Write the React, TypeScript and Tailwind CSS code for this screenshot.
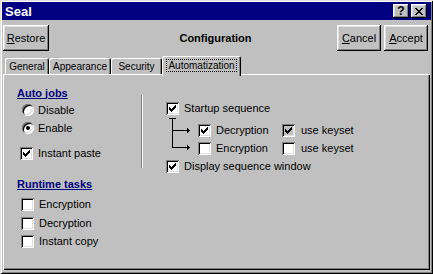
import React from "react";

const font = { fontFamily: '"Liberation Sans", Arial, sans-serif' };

const raised =
  "shadow-[inset_-1px_-1px_0_#000,inset_1px_1px_0_#fff,inset_-2px_-2px_0_#808080,inset_2px_2px_0_#dfdfdf]";
const sunken =
  "shadow-[inset_1px_1px_0_#808080,inset_-1px_-1px_0_#fff,inset_2px_2px_0_#000,inset_-2px_-2px_0_#dfdfdf]";

function Check({ checked = false, disabled = false }: { checked?: boolean; disabled?: boolean }) {
  return (
    <span
      className={`relative block w-[13px] h-[13px] shrink-0 ${sunken} ${disabled ? "bg-[#c0c0c0]" : "bg-white"}`}
    >
      {checked && (
        <svg width="13" height="13" viewBox="0 0 13 13" className="absolute left-0 top-0" shapeRendering="crispEdges">
          <path
            fill="#000"
            d="M9 3h1v1h-1z M8 4h2v1h-2z M3 5h1v1h-1z M7 5h3v1h-3z M3 6h2v1h-2z M6 6h3v1h-3z M3 7h5v1h-5z M4 8h3v1h-3z M5 9h1v1h-1z"
          />
        </svg>
      )}
    </span>
  );
}

function Radio({ checked = false }: { checked?: boolean }) {
  return (
    <span className={`flex items-center justify-center w-[12px] h-[12px] rounded-full bg-white shrink-0 ${sunken}`}>
      {checked && <span className="block w-[4px] h-[4px] rounded-full bg-black" />}
    </span>
  );
}

function CheckRow({
  label,
  checked,
  disabled,
  className = "",
}: {
  label: string;
  checked?: boolean;
  disabled?: boolean;
  className?: string;
}) {
  return (
    <div className={`flex items-center h-[14px] gap-[5px] ${className}`}>
      <Check checked={checked} disabled={disabled} />
      <span>{label}</span>
    </div>
  );
}

function Heading({ children, className = "" }: { children: React.ReactNode; className?: string }) {
  return (
    <div className={`h-[14px] flex items-center font-bold underline text-[#000080] ${className}`}>{children}</div>
  );
}

function Button({ children, className = "" }: { children: React.ReactNode; className?: string }) {
  return (
    <div className={`flex items-center justify-center h-[26px] bg-[#c0c0c0] ${raised} ${className}`}>{children}</div>
  );
}

function Tab({ label, active = false, className = "" }: { label: string; active?: boolean; className?: string }) {
  if (active) {
    return (
      <div
        className={`relative z-10 h-[20px] -mb-[2px] flex justify-center pt-[3px] bg-[#c0c0c0] text-[10px] rounded-tl-[2px] rounded-tr-[2px] shadow-[inset_1px_1px_0_#fff,inset_-1px_0_0_#000,inset_-2px_0_0_#808080] ${className}`}
      >
        <span className="h-[13px] px-[1px] leading-[11px] border border-dotted border-black">{label}</span>
      </div>
    );
  }
  return (
    <div
      className={`h-[16px] flex justify-center pt-[3px] text-[10px] leading-[11px] rounded-tl-[2px] rounded-tr-[2px] shadow-[inset_1px_1px_0_#fff,inset_-1px_0_0_#000,inset_-2px_0_0_#808080] ${className}`}
    >
      {label}
    </div>
  );
}

export default function App() {
  return (
    <div
      style={font}
      className="w-[433px] h-[274px] flex flex-col px-[2px] pt-[2px] pb-[4px] bg-[#c0c0c0] text-[11px] leading-[13px] text-black shadow-[inset_1px_1px_0_#dfdfdf,inset_-1px_-1px_0_#000,inset_2px_2px_0_#fff,inset_-2px_-2px_0_#808080] overflow-hidden"
    >
      {/* title bar */}
      <div className="h-[18px] shrink-0 flex items-center justify-between bg-[#000080] pl-[3px] pr-[4px]">
        <span className="text-white font-bold text-[13px]">Seal</span>
        <div className="flex gap-[2px]">
          <div className={`w-[16px] h-[14px] flex items-center justify-center bg-[#c0c0c0] font-bold text-[12px] leading-[12px] ${raised}`}>
            ?
          </div>
          <div className={`w-[16px] h-[14px] flex items-center justify-center bg-[#c0c0c0] ${raised}`}>
            <svg width="8" height="7" viewBox="0 0 8 7" shapeRendering="crispEdges">
              <path
                fill="#000"
                d="M0 0h2v1h-2z M6 0h2v1h-2z M1 1h2v1h-2z M5 1h2v1h-2z M2 2h4v1h-4z M3 3h2v1h-2z M2 4h4v1h-4z M1 5h2v1h-2z M5 5h2v1h-2z M0 6h2v1h-2z M6 6h2v1h-2z"
              />
            </svg>
          </div>
        </div>
      </div>

      {/* button row */}
      <div className="mt-[5px] shrink-0 grid grid-cols-[1fr_auto_1fr] items-center ml-[1px] mr-[3px]">
        <div className="flex">
          <Button className="w-[46px]">
            <span>
              <span className="underline">R</span>estore
            </span>
          </Button>
        </div>
        <div className="font-bold">Configuration</div>
        <div className="flex justify-end gap-[3px]">
          <Button className="w-[44px]">
            <span>
              <span className="underline">C</span>ancel
            </span>
          </Button>
          <Button className="w-[44px]">
            <span>
              <span className="underline">A</span>ccept
            </span>
          </Button>
        </div>
      </div>

      {/* tabs */}
      <div className="mt-[5px] h-[18px] shrink-0 flex items-end pl-[3px]">
        <Tab label="General" className="w-[44px]" />
        <Tab label="Appearance" className="w-[62px]" />
        <Tab label="Security" className="w-[51px]" />
        <Tab label="Automatization" active className="w-[79px]" />
      </div>

      {/* panel */}
      <div className="flex-1 mx-[1px] flex pl-[14px] pt-[12px] bg-[#c0c0c0] shadow-[inset_1px_1px_0_#fff,inset_-1px_-1px_0_#000,inset_-2px_-2px_0_#808080]">
        <div className="w-[124px] shrink-0 flex flex-col">
          <Heading>Auto jobs</Heading>
          <div className="mt-[3px] h-[14px] flex items-center gap-[4px] pl-[5px]">
            <Radio />
            <span>Disable</span>
          </div>
          <div className="mt-[4px] h-[14px] flex items-center gap-[4px] pl-[5px]">
            <Radio checked />
            <span>Enable</span>
          </div>
          <CheckRow label="Instant paste" checked className="mt-[11px] pl-[3px]" />
          <Heading className="mt-[17px]">Runtime tasks</Heading>
          <CheckRow label="Encryption" className="mt-[6px] pl-[4px] gap-[4px]" />
          <CheckRow label="Decryption" className="mt-[5px] pl-[4px] gap-[4px]" />
          <CheckRow label="Instant copy" className="mt-[4px] pl-[4px] gap-[4px]" />
        </div>

        <div className="mt-[9px] h-[73px] w-[2px] shrink-0 border-l border-[#808080] border-r border-r-white" />

        <div className="ml-[23px] flex flex-col">
          <CheckRow label="Startup sequence" checked className="mt-[15px]" />
          <div className="flex">
            <svg width="32" height="40" viewBox="0 0 32 40" shapeRendering="crispEdges" className="shrink-0">
              <path d="M3 3.5H10 M6.5 3V32" stroke="#000" strokeWidth="1" fill="none" />
              <path d="M6 15.5H21 M6 32.5H21" stroke="#000" strokeWidth="1" fill="none" />
              <path d="M21 13L24 15.5L21 18Z M21 30L24 32.5L21 35Z" fill="#000" />
            </svg>
            <div className="flex flex-col">
              <div className="mt-[8px] flex">
                <CheckRow label="Decryption" checked className="w-[84px]" />
                <CheckRow label="use keyset" checked disabled className="gap-[6px]" />
              </div>
              <div className="mt-[4px] flex">
                <CheckRow label="Encryption" className="w-[84px]" />
                <CheckRow label="use keyset" className="gap-[6px]" />
              </div>
            </div>
          </div>
          <CheckRow label="Display sequence window" checked className="mt-[4px]" />
        </div>
      </div>
    </div>
  );
}
